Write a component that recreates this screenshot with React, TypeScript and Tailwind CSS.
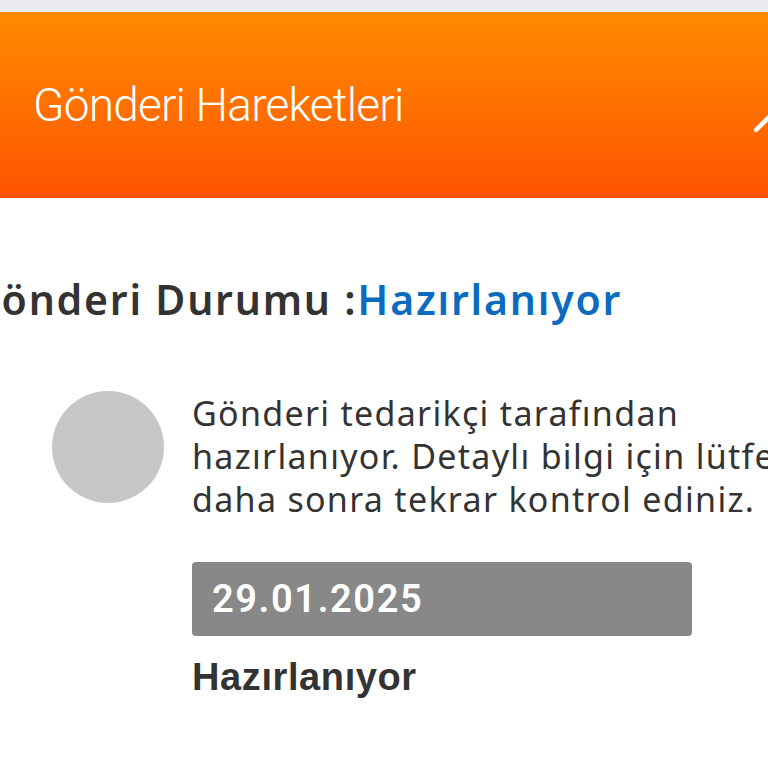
export default function App() {
  return (
    <div className="w-[768px] h-[768px] overflow-hidden bg-white" style={{ fontFamily: '"Noto Sans", Roboto, sans-serif' }}>
      <div className="h-[12px] bg-[#e9ebee]" />
      <div className="relative h-[186px] bg-gradient-to-b from-[#ff8a00] to-[#ff5200] flex items-center">
        <h1 className="ml-[33px] text-white text-[46px] font-light tracking-[-0.8px]" style={{ fontFamily: 'Roboto, sans-serif' }}>
          Gönderi Hareketleri
        </h1>
        <svg className="absolute left-[748px] top-[78px]" width="40" height="44" viewBox="0 0 40 44">
          <path d="M8 40 L30 18 L52 40" fill="none" stroke="white" strokeWidth="4.5" strokeLinecap="round" />
        </svg>
      </div>

      <div className="mt-[77px] -ml-[30px] text-[41px] leading-[48px] font-semibold text-[#333] tracking-[1.8px] whitespace-nowrap">
        Gönderi Durumu :<span className="text-[#0b6cbf]">Hazırlanıyor</span>
      </div>

      <div className="mt-[69px] flex pl-[52px] gap-[28px]">
        <div className="w-[112px] h-[112px] rounded-full bg-[#c6c6c6] shrink-0 -mt-[1px]" />
        <div className="flex-1 min-w-0">
          <p className="text-[34px] leading-[43px] text-[#333] tracking-[1.3px] whitespace-nowrap">
            Gönderi tedarikçi tarafından<br />
            hazırlanıyor. Detaylı bilgi için lütfen<br />
            daha sonra tekrar kontrol ediniz.
          </p>
          <div className="mt-[41px] w-[500px] h-[74px] rounded-[4px] bg-[#888888] flex items-center px-[20px]">
            <span className="text-white text-[38px] font-semibold tracking-[1.6px]" style={{ fontFamily: 'Roboto, sans-serif' }}>29.01.2025</span>
          </div>
          <div className="mt-[19px] text-[38px] leading-[44px] font-bold text-[#333] tracking-[0.6px]" style={{ fontFamily: '"Liberation Sans", Arial, sans-serif' }}>
            Hazırlanıyor
          </div>
        </div>
      </div>
    </div>
  );
}
